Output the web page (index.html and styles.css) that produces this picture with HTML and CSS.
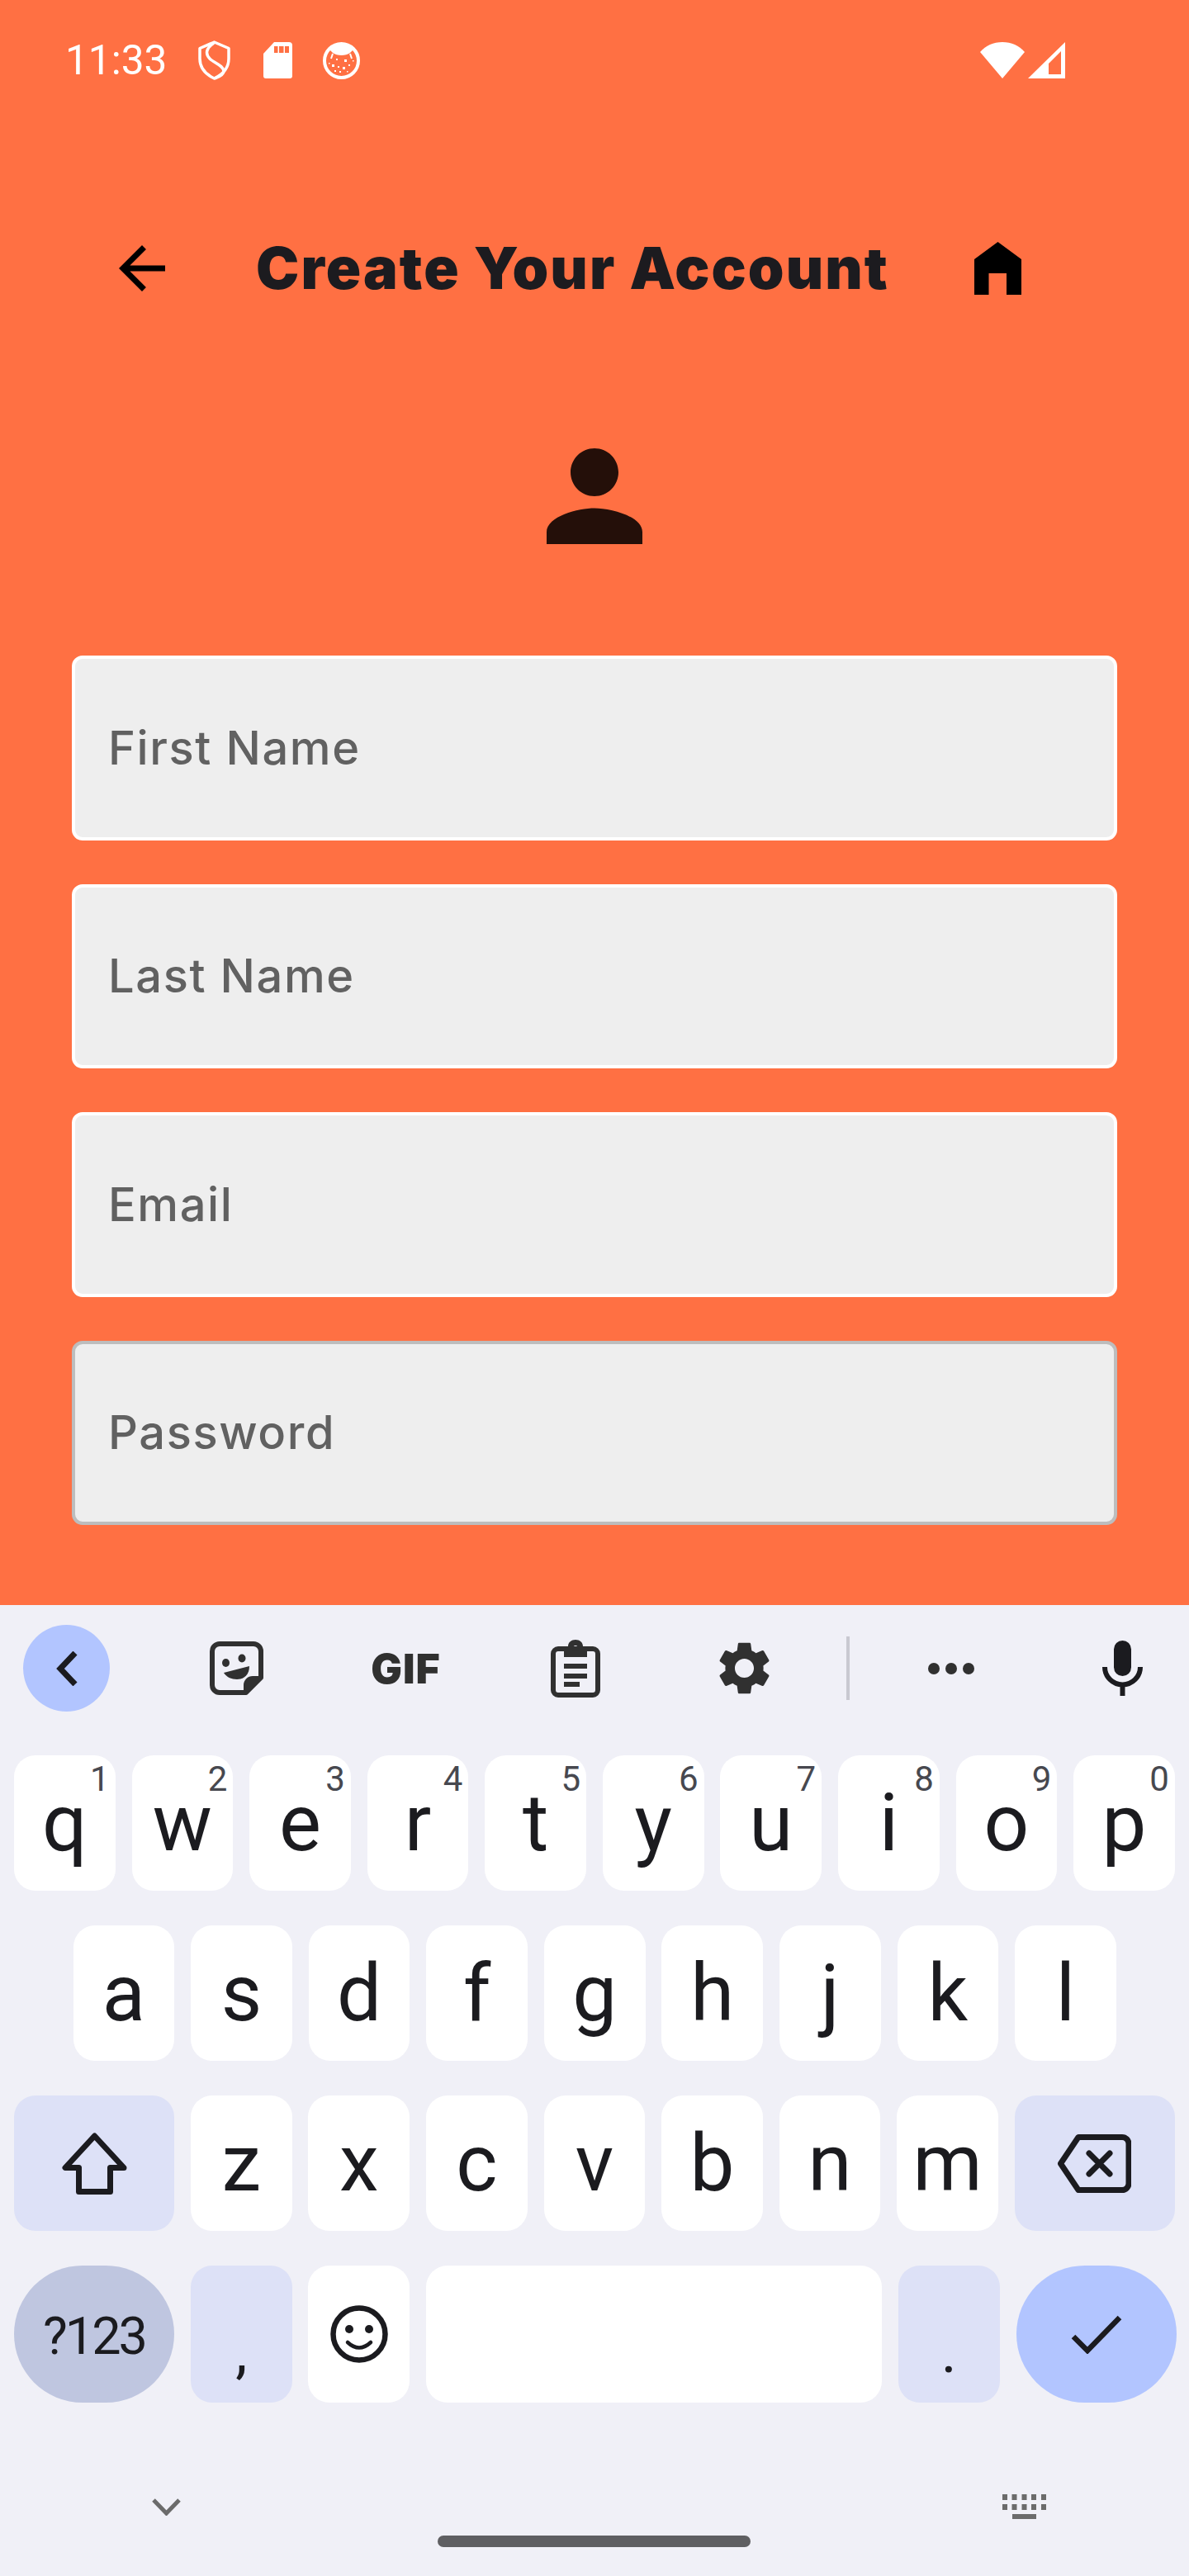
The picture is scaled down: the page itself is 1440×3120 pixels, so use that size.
FILE: index.html
```html
<!DOCTYPE html>
<html lang="en">
<head>
    <meta charset="UTF-8">
    <meta name="viewport" content="width=device-width, initial-scale=1.0">
    <title>Create Your Account</title>
    <link rel="stylesheet" href="styles.css">
</head>
<body>
    <div id="screen">
        <div id="app">
            <div class="status-bar">
                <span class="clock">11:33</span>
                <svg class="st-shield" width="39" height="48" viewBox="0 0 39 48" fill="none" stroke="#fff" stroke-width="3.5" stroke-linejoin="round">
                    <path d="M19.5 2 L37 9.5 V22 C37 33 30 41 19.5 46 C9 41 2 33 2 22 V9.5 Z"/>
                    <path d="M19 3 C10 9 8 16 14 22 C20 28 30 30 31 37 C31 41 26 44 20 46"/>
                </svg>
                <svg class="st-sd" width="35" height="44" viewBox="0 0 35 44">
                    <path fill="#fff" d="M13 0 H31 a4 4 0 0 1 4 4 V41 a3 3 0 0 1 -3 3 H3 a3 3 0 0 1 -3 -3 V14 Z"/>
                    <path fill="#ff7043" d="M13 5 h4.5 v8 h-4.5z M19 5 h5.5 v8 h-5.5z M26 5 h5 v8 h-5z"/>
                </svg>
                <svg class="st-cat" width="45" height="45" viewBox="0 0 45 45">
                    <circle cx="22.500" cy="22.500" r="20.500" fill="none" stroke="#fff" stroke-width="4"/>
                    <path fill="#fff" d="M7 8 C12 1 33 1 38 8 L33 13 C28 17 17 17 12 13 Z"/>
                    <path fill="none" stroke="#fff" stroke-width="2" d="M12 14 L10 20 M33 14 L35 20"/>
                    <path fill="#fff" d="M16 20h2v2h-2z M26 21h3v3h-3z M11 27h3v3h-3z M24 30h3v3h-3z M18 29h2v2h-2z M31 27h2v2h-2z M7 25h1.500v1.500h-1.500z M36 22h1.500v1.500h-1.500z M14 34h2v2h-2z M20 35h2v2h-2z M29 35h1.500v1.500h-1.500z"/>
                </svg>
                <svg class="st-wifi" width="54" height="44" viewBox="0 0 54 44">
                    <path fill="#fff" d="M0 12 C7 4 16 0 27 0 C38 0 47 4 54 12 L27 44 Z"/>
                </svg>
                <svg class="st-signal" width="45" height="44" viewBox="0 0 45 44">
                    <path fill="#fff" fill-rule="evenodd" d="M45 0 V44 H0 Z M40 11 V39 H25 V26 Z"/>
                </svg>
            </div>

            <div class="app-header">
                <svg class="back-icon" width="84" height="84" viewBox="0 0 24 24">
                    <path d="M20 11H7.83l5.59-5.59L12 4l-8 8 8 8 1.41-1.41L7.83 13H20v-2z"/>
                </svg>
                <h1 class="title">Create Your Account</h1>
                <svg class="home-icon" width="57" height="64" viewBox="0 0 57 64">
                    <path d="M28.500 0 L57 21 V64 H39 V38 H17.500 V64 H0 V21 Z"/>
                </svg>
            </div>

            <svg class="avatar" width="174" height="174" viewBox="0 0 24 24">
                <path d="M12 12c2.210 0 4-1.790 4-4s-1.790-4-4-4-4 1.790-4 4 1.790 4 4 4zm0 2c-2.670 0-8 1.340-8 4v2h16v-2c0-2.660-5.330-4-8-4z"/>
            </svg>

            <div class="form">
                <div class="field">First Name</div>
                <div class="field">Last Name</div>
                <div class="field">Email</div>
                <div class="field focused">Password</div>
            </div>
        </div>

        <div id="keyboard">
            <div class="toolbar">
                <div class="collapse-btn">
                    <svg width="26" height="42" viewBox="0 0 26 42" fill="none" stroke="#1b1b1f" stroke-width="7">
                        <path d="M23 2 L5 21 L23 40"/>
                    </svg>
                </div>
                <div class="slots">
                    <div class="slot">
                        <svg width="65" height="65" viewBox="0 0 65 65">
                            <path fill="none" stroke="#303030" stroke-width="6" stroke-linejoin="round" d="M12 3 H53 a9 9 0 0 1 9 9 V44 L44 62 H12 a9 9 0 0 1 -9 -9 V12 a9 9 0 0 1 9 -9 Z"/>
                            <path fill="#303030" d="M62 42 H52 a11 11 0 0 0 -11 11 V62 H45 L62 45 Z"/>
                            <ellipse cx="19.500" cy="26" rx="4.500" ry="5" fill="#303030"/>
                            <ellipse cx="39" cy="20.500" rx="4.500" ry="5" fill="#303030"/>
                            <path fill="#303030" d="M17 38 L48 30 C48 40 42 46 33 46 C26 46 20 43 17 38 Z"/>
                        </svg>
                    </div>
                    <div class="slot"><span class="gif">GIF</span></div>
                    <div class="slot">
                        <svg width="60" height="70" viewBox="0 0 60 70">
                            <rect x="3" y="11" width="54" height="56" rx="6" fill="none" stroke="#303030" stroke-width="6"/>
                            <path fill="#303030" fill-rule="evenodd" d="M16 8 H21 C21 3 25 0 30 0 C35 0 39 3 39 8 H44 V21 H16 Z M30 7 a3.500 3.500 0 1 0 .01 0 Z"/>
                            <path fill="#303030" d="M16 29h28v6H16z M16 41h28v6H16z M16 51h19v6H16z"/>
                        </svg>
                    </div>
                    <div class="slot">
                        <svg width="77" height="77" viewBox="0 0 24 24">
                            <path fill="#303030" d="M19.140 12.940c.04-.3.06-.61.06-.94 0-.32-.02-.64-.07-.94l2.030-1.580c.18-.14.23-.41.12-.61l-1.920-3.320c-.12-.22-.37-.29-.59-.22l-2.390.96c-.5-.38-1.030-.7-1.620-.94l-.36-2.540c-.04-.24-.24-.41-.48-.41h-3.840c-.24 0-.43.17-.47.41l-.36 2.540c-.59.24-1.130.57-1.620.94l-2.390-.96c-.22-.08-.47 0-.59.22L2.740 8.870c-.12.21-.08.47.12.61l2.030 1.580c-.05.3-.09.63-.09.94s.02.64.07.94l-2.030 1.580c-.18.14-.23.41-.12.61l1.920 3.320c.12.22.37.29.59.22l2.390-.96c.5.38 1.030.7 1.620.94l.36 2.540c.05.24.24.41.48.41h3.840c.24 0 .44-.17.47-.41l.36-2.540c.59-.24 1.130-.56 1.620-.94l2.390.96c.22.08.47 0 .59-.22l1.920-3.320c.12-.22.07-.47-.12-.61l-2.010-1.580zM12 15.600c-1.980 0-3.600-1.620-3.600-3.600s1.620-3.600 3.600-3.600 3.600 1.620 3.600 3.600-1.620 3.600-3.600 3.600z"/>
                        </svg>
                    </div>
                </div>
                <div class="tool-divider"></div>
                <div class="slot dots-slot">
                    <svg width="56" height="14" viewBox="0 0 56 14" fill="#303030">
                        <circle cx="7" cy="7" r="7"/><circle cx="28" cy="7" r="7"/><circle cx="49" cy="7" r="7"/>
                    </svg>
                </div>
                <svg class="mic" width="49" height="67" viewBox="0 0 49 67">
                    <rect x="14" y="0" width="21" height="43" rx="10.500" fill="#1b1b1f"/>
                    <path fill="none" stroke="#1b1b1f" stroke-width="6" d="M3 32 a21.500 21.500 0 0 0 43 0 M24.500 54 V67"/>
                </svg>
            </div>

            <div class="key-row">
                <div class="key">q<span class="hint">1</span></div>
                <div class="key">w<span class="hint">2</span></div>
                <div class="key">e<span class="hint">3</span></div>
                <div class="key">r<span class="hint">4</span></div>
                <div class="key">t<span class="hint">5</span></div>
                <div class="key">y<span class="hint">6</span></div>
                <div class="key">u<span class="hint">7</span></div>
                <div class="key">i<span class="hint">8</span></div>
                <div class="key">o<span class="hint">9</span></div>
                <div class="key">p<span class="hint">0</span></div>
            </div>
            <div class="key-row home-row">
                <div class="key">a</div>
                <div class="key">s</div>
                <div class="key">d</div>
                <div class="key">f</div>
                <div class="key">g</div>
                <div class="key">h</div>
                <div class="key">j</div>
                <div class="key">k</div>
                <div class="key">l</div>
            </div>
            <div class="key-row">
                <div class="key wide fn">
                    <svg width="79" height="76" viewBox="0 0 79 76" fill="none" stroke="#1b1b1f" stroke-width="7" stroke-linejoin="round">
                        <path d="M39.500 5 L4 43.500 H20.500 V72.500 H58.500 V43.500 H75 Z"/>
                    </svg>
                </div>
                <div class="key">z</div>
                <div class="key">x</div>
                <div class="key">c</div>
                <div class="key">v</div>
                <div class="key">b</div>
                <div class="key">n</div>
                <div class="key">m</div>
                <div class="key wide fn">
                    <svg width="89" height="71" viewBox="0 0 89 71" fill="none" stroke="#1b1b1f" stroke-width="7" stroke-linejoin="round" stroke-linecap="round">
                        <path d="M3.500 35.500 L25 3.500 H78 a8 8 0 0 1 8 8 V59.500 a8 8 0 0 1 -8 8 H25 Z"/>
                        <path d="M38 23 L63 48 M63 23 L38 48"/>
                    </svg>
                </div>
            </div>
            <div class="key-row bottom-row">
                <div class="key wide pill symbols">?123</div>
                <div class="key fn punct">,</div>
                <div class="key">
                    <svg width="70" height="70" viewBox="0 0 70 70">
                        <circle cx="35" cy="35" r="31.500" fill="none" stroke="#1b1b1f" stroke-width="6.500"/>
                        <circle cx="23" cy="29" r="5" fill="#1b1b1f"/>
                        <circle cx="47" cy="29" r="5" fill="#1b1b1f"/>
                        <path d="M21 45 Q35 58 49 45" fill="none" stroke="#1b1b1f" stroke-width="4.500" stroke-linecap="round"/>
                    </svg>
                </div>
                <div class="key space"></div>
                <div class="key fn punct">.</div>
                <div class="key wide pill enter">
                    <svg width="62" height="47" viewBox="0 0 62 47" fill="none" stroke="#1b1b1f" stroke-width="6.500">
                        <path d="M3 26 L20 43 L59 3"/>
                    </svg>
                </div>
            </div>

            <div class="nav-bar">
                <svg class="nav-chevron" width="35" height="21" viewBox="0 0 35 21" fill="none" stroke="#6b6b6b" stroke-width="5">
                    <path d="M2 2 L17.500 18 L33 2"/>
                </svg>
                <div class="nav-pill"></div>
                <svg class="nav-kbd" width="53" height="30" viewBox="0 0 53 30" fill="#6b6b6b">
                    <path d="M0 0h6v7H0z M11.500 0h6v7h-6z M23.500 0h6v7h-6z M35 0h6v7h-6z M47 0h6v7h-6z"/>
                    <path d="M0 12h6v7H0z M11.500 12h6v7h-6z M23.500 12h6v7h-6z M35 12h6v7h-6z M47 12h6v7h-6z"/>
                    <path d="M12 24h29v6H12z"/>
                </svg>
            </div>
        </div>
    </div>
</body>
</html>
```

FILE: styles.css
```css
* {
    box-sizing: border-box;
}
body {
    margin: 0;
    background-color: #ff7043;
    font-family: Inter, "Liberation Sans", sans-serif;
}
#screen {
    width: 1440px;
    height: 3120px;
    display: flex;
    flex-direction: column;
    overflow: hidden;
}
#app {
    height: 1944px;
    background-color: #ff7043;
}

/* status bar */
.status-bar {
    display: flex;
    align-items: center;
    height: 146px;
    padding-left: 79px;
}
.clock {
    font-family: Roboto, sans-serif;
    font-weight: 400;
    font-size: 49.5px;
    color: #fff;
    width: 161px;
}
.st-sd { margin-left: 40px; }
.st-cat { margin-left: 37px; }
.st-wifi { margin-left: 751px; }
.st-signal { margin-left: 4px; }

/* header */
.app-header {
    display: flex;
    align-items: center;
    height: 84px;
    margin-top: 137px;
    padding-left: 130px;
}
.title {
    margin: 0 0 0 96px;
    width: 760px;
    font-size: 70px;
    font-weight: 900;
    letter-spacing: 2.1px;
    line-height: 84px;
    color: #1c1b1f;
    white-space: nowrap;
}
.home-icon {
    margin-left: 110px;
}
.avatar {
    display: block;
    margin: 147px auto 0;
    fill: #240f09;
}

/* form */
.form {
    display: flex;
    flex-direction: column;
    gap: 53px;
    margin-top: 106px;
    padding: 0 87px;
}
.field {
    height: 223.5px;
    display: flex;
    align-items: center;
    padding-left: 40px;
    background-color: #eeeeee;
    border: 4px solid #fff;
    border-radius: 13px;
    font-size: 56px;
    font-weight: 500;
    letter-spacing: 1.6px;
    color: #616161;
}
.field.focused {
    border-color: #bdbdbd;
}

/* keyboard */
#keyboard {
    flex: 1;
    background-color: #f0f0f7;
    font-family: Roboto, sans-serif;
    color: #1b1b1f;
}
.toolbar {
    display: flex;
    align-items: center;
    height: 105px;
    margin: 24px 0 53px;
    padding-left: 28px;
}
.collapse-btn {
    flex: 0 0 105px;
    height: 105px;
    border-radius: 50%;
    background-color: #b2c5ff;
    display: flex;
    align-items: center;
    justify-content: center;
}
.slots {
    display: flex;
    flex-shrink: 0;
    margin-left: 51px;
}
.slot {
    flex: 0 0 205px;
    display: flex;
    align-items: center;
    justify-content: center;
}
.gif {
    font-family: Inter, sans-serif;
    font-weight: 900;
    font-size: 50px;
    letter-spacing: 1px;
    line-height: 1;
    color: #303030;
}
.tool-divider {
    flex-shrink: 0;
    width: 4px;
    height: 77px;
    margin-left: 21px;
    background-color: #c9c9d1;
}
.dots-slot {
    margin-left: 20px;
}
.mic {
    flex-shrink: 0;
    margin-left: 81px;
}

.key-row {
    display: flex;
    gap: 19.9px;
    height: 164px;
    margin-bottom: 42px;
    padding: 0 17px;
}
.home-row {
    padding-left: 88.5px;
}
.bottom-row {
    height: 166px;
    margin-bottom: 0;
}
.key {
    position: relative;
    flex: 0 0 122.7px;
    display: flex;
    align-items: center;
    justify-content: center;
    background-color: #fff;
    border-radius: 26px;
    font-size: 96px;
    font-weight: 380;
    line-height: 1;
}
.hint {
    position: absolute;
    top: 8px;
    right: 7px;
    font-size: 42px;
    font-weight: 400;
    line-height: 1;
    color: #47484f;
}
.key.wide {
    flex: 0 0 194px;
}
.key.fn {
    background-color: #dde1f7;
}
.key.pill {
    border-radius: 83px;
}
.key.symbols {
    background-color: #bfc6e0;
    font-size: 63px;
    font-weight: 400;
    letter-spacing: -3px;
    padding-top: 5px;
}
.key.enter {
    background-color: #b2c5ff;
}
.key.space {
    flex: 0 0 552px;
}
.key.punct {
    font-size: 72px;
    font-weight: 400;
    padding-top: 44px;
}

/* nav bar */
.nav-bar {
    display: flex;
    align-items: flex-start;
    padding: 111px 0 0 184px;
}
.nav-chevron {
    margin-top: 5px;
}
.nav-pill {
    width: 379px;
    height: 14px;
    margin: 50px 0 0 311px;
    border-radius: 7px;
    background-color: #5f5f62;
}
.nav-kbd {
    margin-left: 305px;
}
```
